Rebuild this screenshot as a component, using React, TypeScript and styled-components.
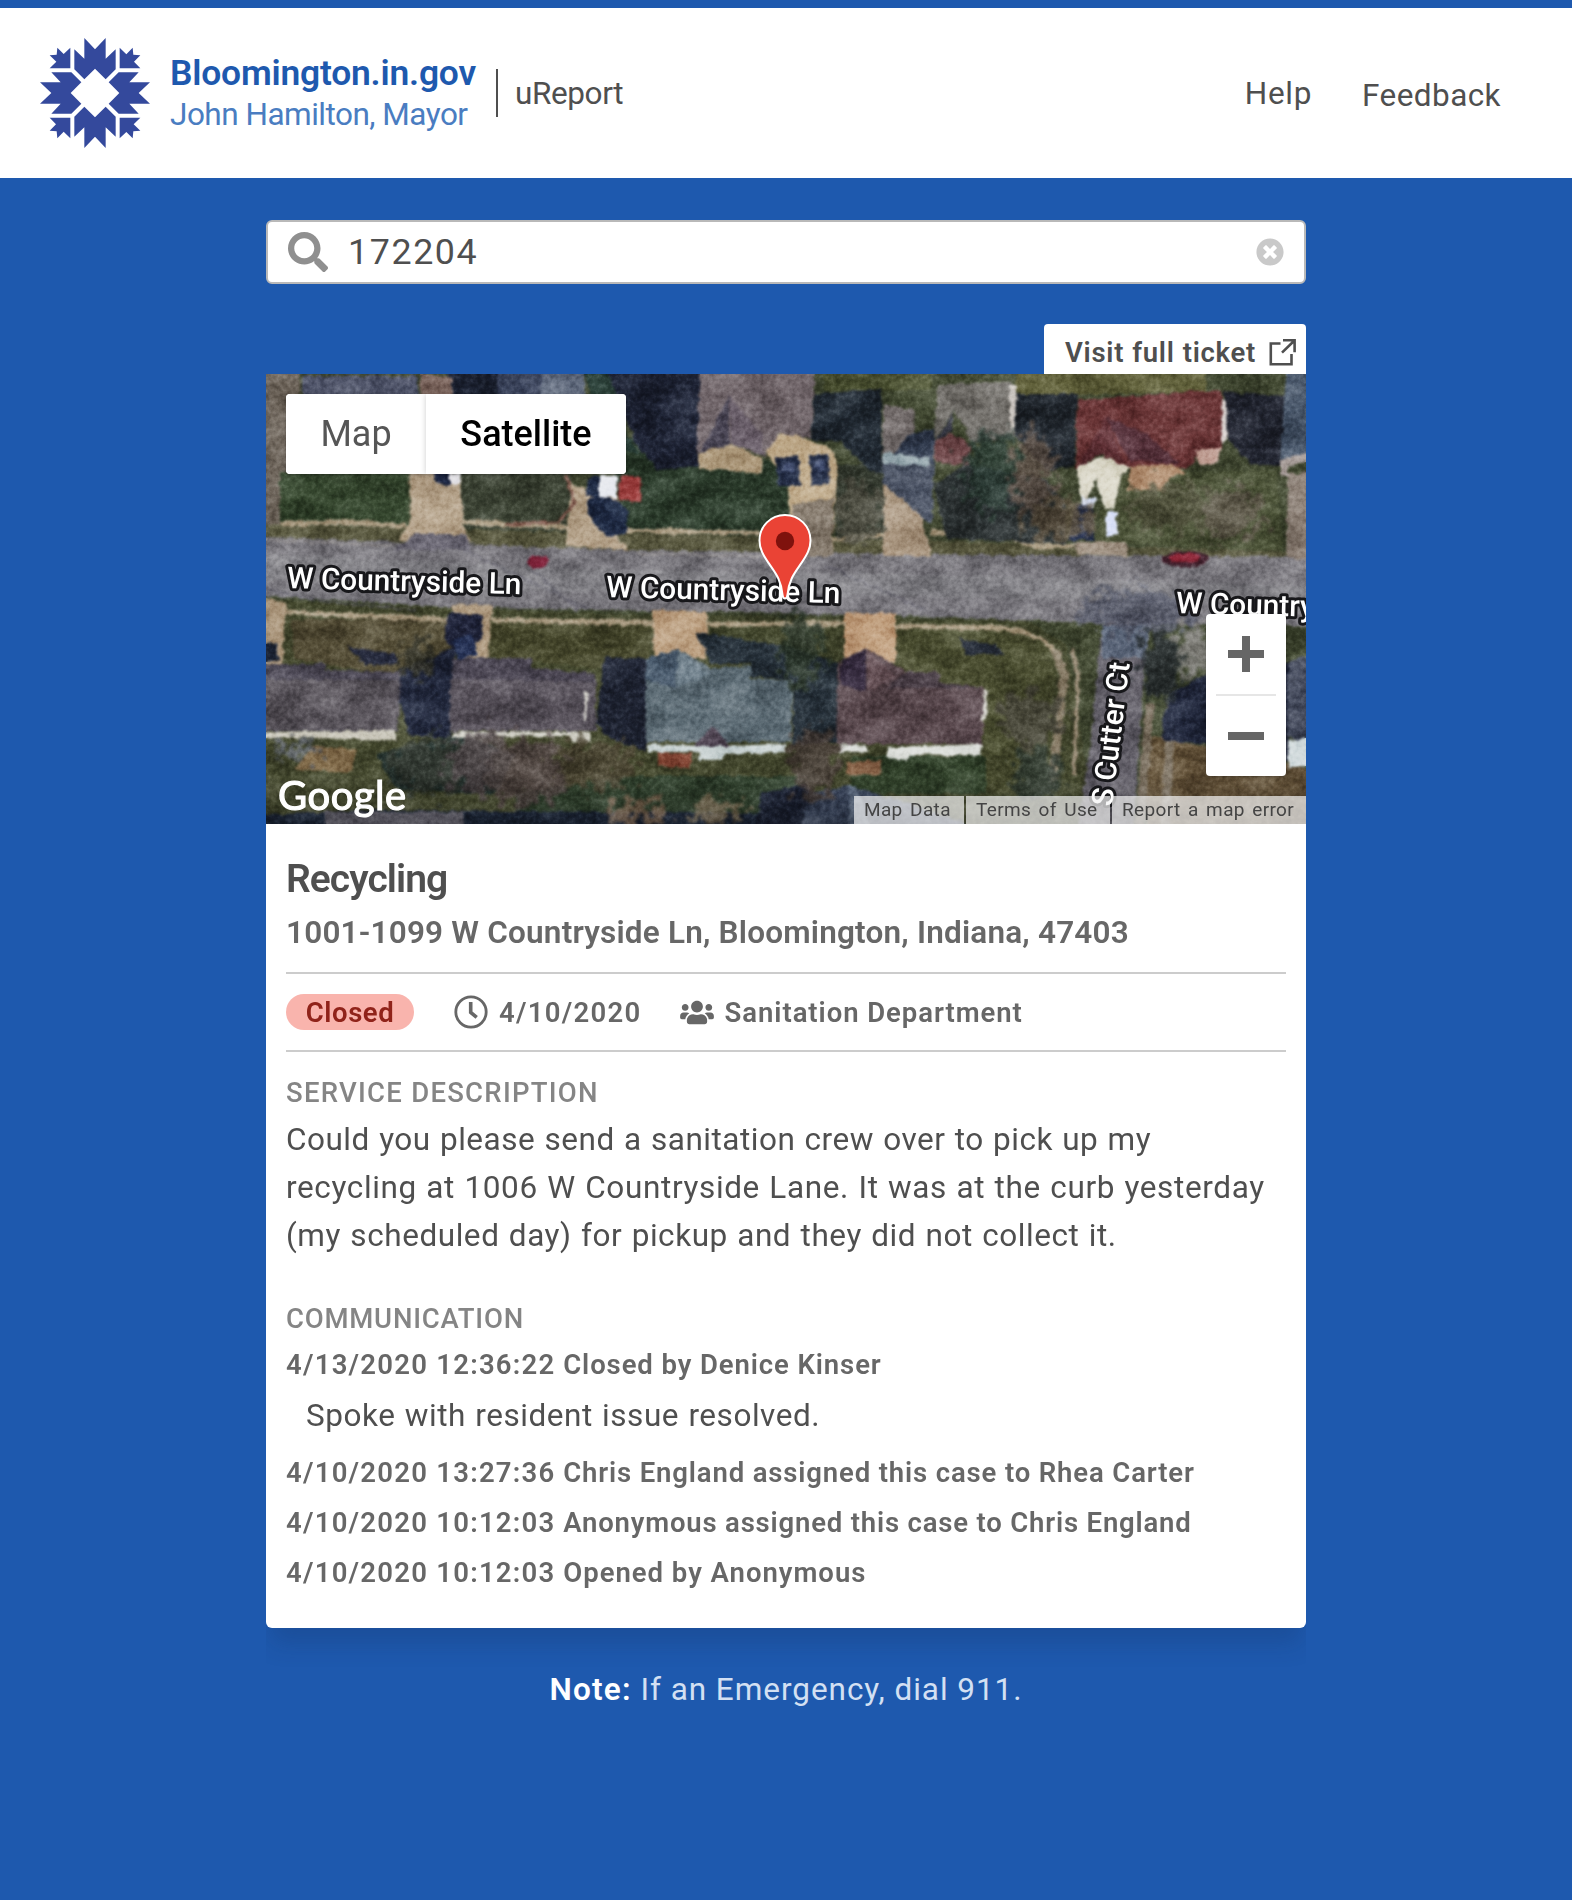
import React from 'react';
import styled, { createGlobalStyle } from 'styled-components';
import { FaSearch, FaTimesCircle, FaUsers } from 'react-icons/fa';

const blue = '#1e59ae';

const GlobalStyle = createGlobalStyle`
  * { box-sizing: border-box; }
  body { margin: 0; background: ${blue}; font-family: Roboto, "Open Sans", sans-serif; color: #4f4f4f; }
  h1, h2, h3, p, ul { margin: 0; padding: 0; font-weight: inherit; list-style: none; }
  a { color: inherit; text-decoration: none; }
  svg { display: block; flex: none; }
`;

/* ---------- header ---------- */

const Page = styled.div`
  min-height: 1900px;
  border-top: 8px solid ${blue};
  background: ${blue};
`;

const Header = styled.header`
  display: flex;
  align-items: center;
  height: 170px;
  padding: 0 71px 0 40px;
  background: #fff;
`;

const Brand = styled.div`
  display: flex;
  flex-direction: column;
  margin-left: 20px;
  padding-top: 3px;
  width: 326px;
  white-space: nowrap;
`;

const SiteName = styled.a`
  color: ${blue};
  font-size: 35.4px;
  font-weight: 600;
  line-height: 40px;
  letter-spacing: -0.2px;
`;

const Mayor = styled.span`
  color: #4a7dc1;
  font-size: 31.5px;
  line-height: 43px;
  letter-spacing: -0.5px;
`;

const AppName = styled.div`
  display: flex;
  align-items: center;
  height: 48px;
  padding-left: 17px;
  border-left: 2px solid #4f4f4f;
  font-size: 31.5px;
  letter-spacing: -0.4px;
`;

const Nav = styled.nav`
  display: flex;
  align-items: center;
  margin-left: auto;
  gap: 50px;
  font-size: 31.5px;
`;

const NavLink = styled.a<{ $track: number; $drop?: number }>`
  letter-spacing: ${(p) => p.$track}px;
  padding-top: ${(p) => p.$drop ?? 0}px;
`;

/* ---------- search ---------- */

const Main = styled.main`
  width: 1040px;
  margin: 0 auto;
  padding-top: 42px;
`;

const SearchBox = styled.div`
  display: flex;
  align-items: center;
  height: 64px;
  padding: 0 20px;
  border: 2px solid #b9b9b9;
  border-radius: 6px;
  background: #fff;
`;

const SearchGlyph = styled(FaSearch)`
  width: 40px;
  height: 40px;
  color: #8f8f8f;
`;

const Query = styled.span`
  flex: 1;
  margin-left: 20px;
  font-size: 35.8px;
  letter-spacing: 1.6px;
`;

const ClearGlyph = styled(FaTimesCircle)`
  width: 28px;
  height: 28px;
  color: #c9c9c9;
`;

/* ---------- ticket ---------- */

const TicketTab = styled.a`
  display: flex;
  align-items: center;
  width: 262px;
  height: 50px;
  margin: 40px 0 0 auto;
  padding: 6px 10px 0 21px;
  border-radius: 4px 4px 0 0;
  background: #fff;
  font-size: 27.5px;
  font-weight: 600;
  letter-spacing: 0.72px;
  word-spacing: 0.6px;
  white-space: nowrap;
  justify-content: space-between;
`;

const Ticket = styled.article`
  border-radius: 0 0 6px 6px;
  background: #fff;
  box-shadow: 0 20px 25px -5px rgba(20, 40, 80, 0.22);
  clip-path: inset(0 0 -60px 0);
`;

const MapFrame = styled.div`
  position: relative;
  height: 450px;
  overflow: hidden;
`;

const MapTypes = styled.div`
  position: absolute;
  left: 20px;
  top: 20px;
  display: flex;
  height: 80px;
  border-radius: 4px;
  overflow: hidden;
  background: #fff;
  box-shadow: 0 1px 3px rgba(0, 0, 0, 0.3);
`;

const MapType = styled.button<{ $active?: boolean }>`
  width: ${(p) => (p.$active ? 200 : 140)}px;
  border: 0;
  padding: 0;
  background: #fff;
  box-shadow: ${(p) => (p.$active ? '0 0 6px rgba(0, 0, 0, 0.2)' : 'none')};
  color: ${(p) => (p.$active ? '#000' : '#565656')};
  font: ${(p) => (p.$active ? 500 : 400)} 36px Roboto, sans-serif;
`;

const Zoom = styled.div`
  position: absolute;
  right: 20px;
  top: 240px;
  display: flex;
  flex-direction: column;
  align-items: center;
  width: 80px;
  height: 162px;
  border-radius: 4px;
  background: #fff;
  box-shadow: 0 1px 3px rgba(0, 0, 0, 0.3);
`;

const ZoomStep = styled.button`
  display: grid;
  place-items: center;
  flex: 1;
  width: 80px;
  border: 0;
  padding: 0;
  background: transparent;
`;

const ZoomRule = styled.div`
  width: 60px;
  height: 2px;
  background: #e6e6e6;
`;

const GoogleMark = styled.div`
  position: absolute;
  left: 12px;
  bottom: 8px;
  color: #fff;
  font: 400 40px/42px Lato, sans-serif;
  letter-spacing: 0.5px;
  -webkit-text-stroke: 1.2px #fff;
`;

const Legal = styled.div`
  position: absolute;
  right: 0;
  bottom: 0;
  display: flex;
  height: 28px;
  gap: 2px;
  font-size: 19px;
  letter-spacing: 0.35px;
  word-spacing: 2.4px;
  line-height: 27px;
  color: #444;
  white-space: nowrap;
`;

const LegalItem = styled.a<{ $w: number }>`
  width: ${(p) => p.$w}px;
  padding-left: 10px;
  background: rgba(245, 245, 245, 0.7);
`;

const Body = styled.div`
  padding: 27px 20px 35px;
`;

const Title = styled.h1`
  font-size: 39px;
  font-weight: 600;
  line-height: 56px;
  letter-spacing: -0.95px;
`;

const Address = styled.h2`
  margin: 2px 0 15px;
  color: #676767;
  font-size: 31.5px;
  font-weight: 600;
  line-height: 48px;
  letter-spacing: 0.2px;
  white-space: nowrap;
`;

const Facts = styled.div`
  display: flex;
  align-items: center;
  height: 80px;
  border-top: 2px solid #ccc;
  border-bottom: 2px solid #ccc;
  color: #676767;
  font-size: 27.5px;
  font-weight: 600;
`;

const Status = styled.span`
  display: flex;
  align-items: center;
  justify-content: center;
  width: 128px;
  height: 36px;
  border-radius: 18px;
  background: #f9b4ad;
  color: #90231a;
  letter-spacing: 0.55px;
`;

const Fact = styled.span<{ $gap: number; $track: number }>`
  display: flex;
  align-items: center;
  gap: 11px;
  margin-left: ${(p) => p.$gap}px;
  letter-spacing: ${(p) => p.$track}px;
`;

const UsersGlyph = styled(FaUsers)`
  width: 34px;
  height: 27px;
`;

const Label = styled.h3<{ $top: number; $track: number }>`
  margin-top: ${(p) => p.$top}px;
  color: #858585;
  font-size: 27.5px;
  font-weight: 500;
  line-height: 40px;
  letter-spacing: ${(p) => p.$track}px;
`;

const Description = styled.p`
  margin-top: 3px;
  font-size: 31.5px;
  line-height: 48px;
  word-spacing: 1px;
`;

const Line = styled.span<{ $track: number }>`
  display: block;
  white-space: nowrap;
  letter-spacing: ${(p) => p.$track}px;
`;

const LogEntry = styled.p<{ $top: number; $track: number }>`
  margin-top: ${(p) => p.$top}px;
  color: #676767;
  font-size: 27.5px;
  font-weight: 600;
  line-height: 40px;
  letter-spacing: ${(p) => p.$track}px;
  white-space: nowrap;
`;

const Stamp = styled.time`
  letter-spacing: 1.25px;
`;

const Remark = styled.p`
  margin: 7px 0 0 20px;
  font-size: 31.5px;
  line-height: 48px;
  letter-spacing: 0.54px;
  word-spacing: 1px;
`;

const Note = styled.p`
  margin-top: 38px;
  color: #d3e0f3;
  font-size: 31.5px;
  line-height: 48px;
  letter-spacing: 0.95px;
  text-align: center;

  strong { color: #fff; font-weight: 600; letter-spacing: 1.2px; }
`;

/* ---------- drawings ---------- */

const Logo = () => (
  <svg width="110" height="110" viewBox="12 12 330 330" fill="#34499c">
    {[0, 90, 180, 270].map((r) => (
      <g key={r} transform={`rotate(${r} 177 177)`}>
        <path d="M145 12l32 34 32-34v62l30-28v60l-30 30-32-32-32 32-30-30V46l30 28z" />
        <path d="M103 103H41l20-20-20-19 21-2 2-21 19 19 20-19z" />
      </g>
    ))}
  </svg>
);

const External = () => (
  <svg width="27" height="27" viewBox="0 0 27 27" fill="none" stroke="#4f4f4f" strokeWidth="2.6">
    <path d="M11.500 4.500H1.800v20.800h20.700V15M14 1.300h11.600v12M25.200 1.700L13 13.600" />
  </svg>
);

const Clock = () => (
  <svg width="34" height="34" viewBox="0 0 34 34" fill="none" stroke="#676767">
    <circle cx="17" cy="17" r="15.2" strokeWidth="2.8" />
    <path d="M16.700 7v10.400l6 5" strokeWidth="3.600" />
  </svg>
);

const Pin = styled.svg`
  position: absolute;
  left: 492px;
  top: 139px;
`;

type Shape = [fill: string, points: string];

const ground: Shape[] = [
  ['#434a33', '0,0 1040,0 1040,450 0,450'],
  ['#6b6258', '0,0 34,0 30,100 14,160 0,160'],
  ['#34452d', '14,98 142,98 143,152 14,150'],
  ['#3d4435', '190,98 306,98 300,158 192,155'],
  ['#2b3b2b', '340,60 525,90 525,164 360,158'],
  ['#353b30', '570,90 618,90 618,170 570,168'],
  ['#494f30', '558,0 665,0 665,16 558,18'],
  ['#60603a', '750,0 940,0 940,18 750,22'],
  ['#4c5338', '840,100 1010,96 1018,178 830,168'],
  ['#59583f', '0,150 300,158 620,166 1040,178 1040,188 0,172'],
  ['#45492f', '0,226 340,240 760,246 800,270 830,450 0,450'],
  ['#554e37', '25,245 190,245 185,285 120,300 28,285'],
  ['#46472c', '222,247 388,248 380,300 222,282'],
  ['#4b4e31', '630,252 762,256 790,274 780,420 640,420'],
  ['#32422b', '585,382 720,382 720,420 585,420'],
  ['#30402d', '350,402 540,402 540,450 250,450 250,420'],
  ['#64533a', '880,360 1040,395 1040,450 880,450'],
];

const paving: Shape[] = [
  ['#79777d', '0,163 140,168 360,176 640,180 1040,183 1040,252 860,250 640,242 390,237 200,234 0,222'],
  ['#838287', '0,180 300,195 640,200 1040,212 1040,232 640,222 300,218 0,206'],
  ['#b5a38b', '143,98 195,98 197,150 205,168 132,166 144,148'],
  ['#6f6c78', '148,160 200,160 204,176 128,176'],
  ['#b5a38b', '305,110 352,122 350,160 362,176 300,172'],
  ['#bda888', '495,70 520,58 566,74 572,90 570,118 566,182 524,182 522,112'],
  ['#8b8073', '526,130 568,124 566,182 524,182'],
  ['#4a5263', '617,82 668,92 666,150 617,125'],
  ['#a99680', '617,110 655,140 666,182 617,182'],
  ['#a09283', '808,168 860,168 862,182 812,180'],
  ['#8b7f75', '1022,100 1040,98 1040,186 1020,184'],
  ['#ae9a80', '0,224 22,230 18,250 17,290 0,290'],
  ['#ae9a80', '186,230 227,232 221,284 192,284'],
  ['#bb9f80', '386,236 442,238 440,285 388,285'],
  ['#c09f7e', '578,238 630,240 630,288 578,284'],
  ['#66636c', '838,240 886,242 878,300 868,450 812,450 824,370 834,270'],
  ['#626d80', '836,252 884,250 880,284 836,284'],
];

const shade: Shape[] = [
  ['#1d2333', '180,0 232,0 232,60 176,60'],
  ['#20332c', '318,0 348,0 360,60 376,82 340,70'],
  ['#1d2233', '342,0 436,0 432,92 392,96 370,70'],
  ['#202831', '548,20 615,15 617,100 604,96 574,68 545,65'],
  ['#22282f', '748,20 812,20 808,92 780,96 748,60'],
  ['#20232e', '958,18 1022,22 1016,92 985,90 958,60'],
  ['#2d3334', '668,110 700,90 780,105 800,130 800,170 680,165'],
  ['#222638', '80,272 130,280 132,290 100,292'],
  ['#20263a', '134,296 190,272 184,366 142,360 132,320'],
  ['#20243a', '182,240 216,240 216,265 196,280 178,268'],
  ['#1f2433', '338,284 382,284 380,378 346,366 330,350'],
  ['#252f38', '430,258 522,272 575,290 572,368 526,372 528,306 485,302 485,290 445,290'],
  ['#232934', '692,264 728,270 740,282 700,280'],
  ['#20263a', '895,350 905,318 960,290 1022,290 1022,388 962,372 898,366'],
  ['#1d2637', '0,441 100,436 560,440 560,450 0,450'],
  ['#1d2334', '496,418 540,410 560,430 556,450 490,450'],
  ['#26332f', '110,380 195,360 250,380 230,420 130,415'],
];

const buildings: Shape[] = [
  ['#4b5065', '36,2 152,2 152,32 36,32'],
  ['#816b63', '154,0 186,4 186,30 154,30'],
  ['#3a435b', '232,0 275,0 275,60 232,60'],
  ['#5b6578', '275,0 318,0 320,60 275,60'],
  ['#71666a', '434,0 549,0 545,64 513,60 498,82 463,70 431,80'],
  ['#454150', '463,22 463,70 433,82'],
  ['#685d68', '463,22 496,60 496,80 465,70'],
  ['#b3a083', '432,80 463,70 497,84 496,100 432,94'],
  ['#77706f', '617,30 649,36 648,58 638,78 617,80'],
  ['#343e51', '640,62 668,54 668,92 628,80'],
  ['#9babb1', '617,78 664,84 662,92 618,90'],
  ['#74716c', '672,10 746,8 751,20 748,64 706,68 688,36 668,66'],
  ['#d1ccc7', '743,12 750,12 749,56 745,58'],
  ['#3b3d49', '688,36 686,58 668,68'],
  ['#70494b', '668,68 686,59 705,70 703,92 669,88'],
  ['#6c3738', '812,26 955,16 958,42 955,76 935,78 922,94 860,94 835,80 809,94'],
  ['#532f38', '840,42 862,86 914,90 880,60'],
  ['#5f3035', '840,42 812,92 835,80 858,88'],
  ['#dcd9cb', '811,92 837,82 864,94 856,100 848,136 838,134 830,104 820,130 815,128'],
  ['#ae8b6d', '864,92 906,90 920,98 904,104 898,118 862,116'],
  ['#cbaea4', '930,76 955,74 953,88 932,92'],
  ['#d9d2cf', '956,24 961,26 960,68 956,70'],
  ['#4a586b', '1020,0 1040,0 1040,82 1014,88'],
  ['#a79d99', '1014,86 1040,80 1040,88 1022,92 1022,102 1014,100'],
  ['#4e4a57', '0,290 60,290 60,296 135,298 133,357 0,357'],
  ['#5b565d', '0,306 134,306 132,356 0,356'],
  ['#c9c6ba', '0,358 130,356 130,366 40,364 0,364'],
  ['#4d4855', '187,284 265,284 265,294 330,300 330,357 184,357'],
  ['#59535c', '184,305 330,308 329,357 184,357'],
  ['#cfcec4', '186,358 325,358 324,368 310,368 300,362 186,364'],
  ['#d3d1ca', '319,316 322,316 320,346 317,346'],
  ['#5e6d76', '380,284 412,276 445,294 485,292 485,304 528,306 524,368 380,368'],
  ['#4b5c6e', '380,284 412,276 410,314 380,306'],
  ['#74848f', '412,276 444,300 411,314'],
  ['#c9d2d2', '382,370 432,372 448,358 462,372 520,370 520,378 458,380 456,386 434,386 432,378 382,378'],
  ['#4e4351', '446,352 464,372 428,372'],
  ['#8a4d3b', '392,378 426,380 424,394 392,392'],
  ['#59484d', '572,290 600,274 640,298 672,298 672,308 718,314 716,370 570,370'],
  ['#33293c', '576,286 600,275 600,318 574,310'],
  ['#6a555a', '602,276 630,302 602,318'],
  ['#463b43', '640,298 674,298 674,308 718,314 690,314 620,314'],
  ['#d9dbd7', '572,370 602,372 602,378 572,378'],
  ['#dcdeda', '648,372 716,370 714,382 652,380 640,386 620,384 622,374'],
  ['#d3d1ca', '718,314 722,316 720,346 716,346'],
  ['#8f6b50', '580,388 616,386 614,402 580,400'],
  ['#42485a', '1022,288 1040,282 1040,366 1022,364'],
  ['#cfd8da', '1022,366 1040,364 1040,392 1022,394'],
  ['#63616c', '60,438 197,438 197,450 60,450'],
  ['#3d485e', '540,420 582,412 640,428 700,450 536,450'],
  ['#657388', '582,412 590,412 604,450 584,450'],
  ['#86704f', '46,372 90,376 86,398 28,396'],
];

const vehicles: Shape[] = [
  ['#222b43', '510,84 532,82 534,112 512,112'],
  ['#222b43', '543,82 562,80 564,110 546,112'],
  ['#475374', '516,90 528,88 529,98 517,98'],
  ['#475374', '548,88 558,86 560,96 550,98'],
  ['#1e2942', '320,130 330,120 350,126 362,138 360,160 340,162 328,150'],
  ['#e7e9ee', '333,100 352,102 351,124 333,122'],
  ['#1c2740', '322,104 333,102 333,124 320,122'],
  ['#a04342', '354,102 376,104 374,128 353,126'],
  ['#1f2946', '168,98 184,98 184,112 170,110'],
  ['#e4e3e7', '184,98 196,98 194,110 184,110'],
  ['#1c2540', '810,130 826,130 828,166 802,166 806,145'],
  ['#dbe2f6', '840,138 850,138 852,160 840,162'],
  ['#d5dcec', '815,124 830,124 828,134 816,132'],
  ['#273356', '186,266 206,260 212,280 192,286'],
  ['#1b2334', '0,270 10,268 14,286 0,288'],
];

const foliage: [string, number, number, number, number][] = [
  ['#2b3c34', 727, 98, 28, 40],
  ['#60534a', 768, 100, 20, 44],
  ['#5b503f', 795, 145, 34, 20],
  ['#555540', 905, 132, 42, 24],
  ['#625b4e', 965, 140, 30, 28],
  ['#565549', 592, 140, 24, 32],
  ['#2a3528', 535, 276, 22, 38],
  ['#34342a', 150, 286, 14, 22],
  ['#363c34', 165, 392, 40, 28],
  ['#504648', 215, 388, 34, 30],
  ['#574b49', 262, 398, 44, 34],
  ['#4c4533', 330, 390, 40, 24],
  ['#4d423c', 548, 388, 24, 36],
  ['#47453a', 765, 345, 32, 26],
  ['#2b352d', 770, 400, 26, 26],
  ['#2b3135', 895, 290, 20, 40],
  ['#84827f', 930, 275, 16, 26],
  ['#575b6b', 870, 236, 60, 20],
  ['#8b745f', 372, 440, 28, 12],
  ['#7a6c54', 452, 436, 26, 12],
  ['#666b74', 30, 376, 22, 8],
];

const walks = [
  'M14 150L74 148L140 152', 'M196 148L302 153', 'M350 156L524 160', 'M566 166L618 160', 'M665 158L735 162L770 172L808 172',
  'M20 238L150 244L190 246', 'M226 246L388 249', 'M442 250L580 250', 'M630 252L735 254Q775 258 792 280',
];

const streets: [string, number, number, number][] = [
  ['W Countryside Ln', 21, 214, 1.5],
  ['W Countryside Ln', 340, 223, 1.5],
  ['W Countryside Ln', 910, 239, 1.5],
  ['S Cutter Ct', 846, 433, -83],
];

const StreetName = styled.text`
  font: 500 29.8px Roboto, sans-serif;
  fill: #fff;
  stroke: #17171a;
  stroke-width: 6px;
  stroke-linejoin: round;
  paint-order: stroke;
`;

const Grain = styled.rect`
  mix-blend-mode: soft-light;
`;

const polygons = (shapes: Shape[]) =>
  shapes.map(([fill, points]) => <polygon key={points} fill={fill} points={points} />);

const Terrain = () => (
  <>
    {polygons(ground)}
    {polygons(paving)}
    <g fill="none" stroke="#aa9c83" strokeWidth="5">
      {walks.map((d) => <path key={d} d={d} />)}
      <path d="M788 275L798 300L786 410" stroke="#877b66" strokeWidth="9" />
      <path d="M806 275L812 300L808 400" stroke="#988b76" strokeWidth="4" />
      <path d="M884 330L874 450M905 330L900 450" stroke="#7b7060" strokeWidth="9" />
      <path d="M300 100L308 130L292 148L240 150" stroke="#835e52" strokeWidth="3" />
    </g>
    <g fill="none" stroke="#5f5e6a" strokeWidth="2" opacity="0.6">
      <path d="M190 172L240 196L325 236M265 195L312 235M560 192L660 236M0 215L60 228L150 236" />
      <path d="M370 180L500 182M0 166L130 172" stroke="#a09a97" />
    </g>
    {polygons(shade)}
    {polygons(buildings)}
    {polygons(vehicles)}
    <ellipse cx="272" cy="188" rx="11" ry="6" fill="#8c2b45" />
    <ellipse cx="919" cy="185" rx="24" ry="8" fill="#40202c" />
    <ellipse cx="918" cy="184" rx="15" ry="5" fill="#8b2535" />
  </>
);

const Satellite = () => (
  <svg width="1040" height="450" viewBox="0 0 1040 450">
    <defs>
      <filter id="rough" x="-10" y="-10" width="1060" height="470" filterUnits="userSpaceOnUse" colorInterpolationFilters="sRGB">
        <feTurbulence type="fractalNoise" baseFrequency="0.14" numOctaves="2" seed="4" result="n" />
        <feDisplacementMap in="SourceGraphic" in2="n" xChannelSelector="R" yChannelSelector="G" scale="6" />
        <feGaussianBlur stdDeviation="0.9" />
      </filter>
      <filter id="leafy" x="-10" y="-10" width="1060" height="470" filterUnits="userSpaceOnUse" colorInterpolationFilters="sRGB">
        <feTurbulence type="fractalNoise" baseFrequency="0.1" numOctaves="4" seed="9" result="n" />
        <feDisplacementMap in="SourceGraphic" in2="n" xChannelSelector="R" yChannelSelector="G" scale="50" />
        <feGaussianBlur stdDeviation="1.6" />
      </filter>
      <filter id="fine" x="0" y="0" width="1040" height="450" filterUnits="userSpaceOnUse" colorInterpolationFilters="sRGB">
        <feTurbulence type="fractalNoise" baseFrequency="0.2" numOctaves="3" seed="2" />
        <feColorMatrix values="1.6 0 0 0 -.3  1.6 0 0 0 -.3  1.6 0 0 0 -.3  0 0 0 0 1" />
      </filter>
      <filter id="broad" x="0" y="0" width="1040" height="450" filterUnits="userSpaceOnUse" colorInterpolationFilters="sRGB">
        <feTurbulence type="fractalNoise" baseFrequency="0.025 0.04" numOctaves="3" seed="7" />
        <feColorMatrix values="2 0 0 0 -.5  2 0 0 0 -.5  2 0 0 0 -.5  0 0 0 0 1" />
      </filter>
      <linearGradient id="foot" x1="0" y1="0" x2="0" y2="1">
        <stop offset="0" stopColor="#000" stopOpacity="0" />
        <stop offset="1" stopColor="#000" stopOpacity="0.2" />
      </linearGradient>
    </defs>
    <Terrain />
    <g filter="url(#rough)"><Terrain /></g>
    <g filter="url(#leafy)" opacity="0.85">
      {foliage.map(([fill, cx, cy, rx, ry]) => (
        <ellipse key={`${cx}-${cy}`} fill={fill} cx={cx} cy={cy} rx={rx} ry={ry} />
      ))}
    </g>
    <Grain width="1040" height="450" filter="url(#fine)" opacity="0.32" />
    <Grain width="1040" height="450" filter="url(#broad)" opacity="0.35" />
    <rect y="400" width="1040" height="50" fill="url(#foot)" />
    {streets.map(([name, x, y, angle]) => (
      <StreetName key={x} transform={`translate(${x} ${y}) rotate(${angle})`}>{name}</StreetName>
    ))}
  </svg>
);

const Step = ({ d }: { d: string }) => (
  <svg width="36" height="36" viewBox="0 0 36 36"><path d={d} fill="#666" /></svg>
);

export default function App() {
  return (
    <Page>
      <GlobalStyle />
      <Header>
        <Logo />
        <Brand>
          <SiteName>Bloomington.in.gov</SiteName>
          <Mayor>John Hamilton, Mayor</Mayor>
        </Brand>
        <AppName>uReport</AppName>
        <Nav>
          <NavLink $track={0.72}>Help</NavLink>
          <NavLink $track={0.42} $drop={4}>Feedback</NavLink>
        </Nav>
      </Header>
      <Main>
        <SearchBox>
          <SearchGlyph />
          <Query>172204</Query>
          <ClearGlyph />
        </SearchBox>
        <TicketTab>
          Visit full ticket
          <External />
        </TicketTab>
        <Ticket>
          <MapFrame>
            <Satellite />
            <Pin width="54" height="88" viewBox="0 0 54 88">
              <path
                d="M27 2C12.800 2 1.500 13.300 1.500 27.400c0 8.600 3.800 14.800 8.800 22.200C17 59.500 23 66 24.600 82c.2 2.400 1 3.500 2.400 3.500s2.200-1.100 2.400-3.500C31 66 37 59.500 43.700 49.600c5-7.400 8.800-13.600 8.800-22.200C52.500 13.300 41.200 2 27 2z"
                fill="#ea4335"
                stroke="#fff"
                strokeWidth="2"
              />
              <circle cx="27" cy="28" r="9.200" fill="#7f120d" />
            </Pin>
            <MapTypes>
              <MapType>Map</MapType>
              <MapType $active>Satellite</MapType>
            </MapTypes>
            <Zoom>
              <ZoomStep><Step d="M14 0h8v14h14v8H22v14h-8V22H0v-8h14z" /></ZoomStep>
              <ZoomRule />
              <ZoomStep><Step d="M0 14h36v8H0z" /></ZoomStep>
            </Zoom>
            <GoogleMark>Google</GoogleMark>
            <Legal>
              <LegalItem $w={110}>Map Data</LegalItem>
              <LegalItem $w={144}>Terms of Use</LegalItem>
              <LegalItem $w={194}>Report a map error</LegalItem>
            </Legal>
          </MapFrame>
          <Body>
            <Title>Recycling</Title>
            <Address>1001-1099 W Countryside Ln, Bloomington, Indiana, 47403</Address>
            <Facts>
              <Status>Closed</Status>
              <Fact $gap={40} $track={1.3}><Clock />4/10/2020</Fact>
              <Fact $gap={38} $track={0.95}><UsersGlyph />Sanitation Department</Fact>
            </Facts>
            <Label $top={21} $track={1.26}>SERVICE DESCRIPTION</Label>
            <Description>
              <Line $track={0.51}>Could you please send a sanitation crew over to pick up my</Line>
              <Line $track={0.63}>recycling at 1006 W Countryside Lane. It was at the curb yesterday</Line>
              <Line $track={0.56}>(my scheduled day) for pickup and they did not collect it.</Line>
            </Description>
            <Label $top={39} $track={0.78}>COMMUNICATION</Label>
            <LogEntry $top={6} $track={0.9}><Stamp>4/13/2020 12:36:22</Stamp> Closed by Denice Kinser</LogEntry>
            <Remark>Spoke with resident issue resolved.</Remark>
            <LogEntry $top={13} $track={0.86}><Stamp>4/10/2020 13:27:36</Stamp> Chris England assigned this case to Rhea Carter</LogEntry>
            <LogEntry $top={10} $track={0.82}><Stamp>4/10/2020 10:12:03</Stamp> Anonymous assigned this case to Chris England</LogEntry>
            <LogEntry $top={10} $track={0.98}><Stamp>4/10/2020 10:12:03</Stamp> Opened by Anonymous</LogEntry>
          </Body>
        </Ticket>
        <Note><strong>Note:</strong> If an Emergency, dial 911.</Note>
      </Main>
    </Page>
  );
}
